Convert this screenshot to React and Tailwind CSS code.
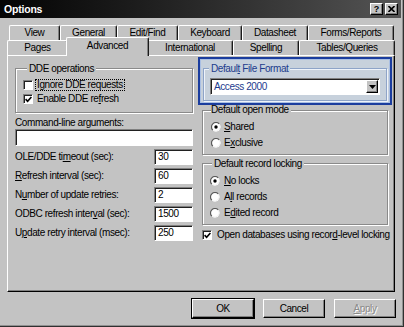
import React from 'react';

const raised = 'border border-t-white border-l-white border-r-black border-b-black shadow-[inset_-1px_-1px_0_#808080]';
const sunken = 'border border-t-[#808080] border-l-[#808080] border-r-white border-b-white shadow-[inset_1px_1px_0_#202020]';
const etched = 'border border-[#8a8a8a] shadow-[inset_1px_1px_0_#fff,1px_1px_0_#fff]';

const backTabs = [
    { label: 'View', w: 'w-[51px]' },
    { label: 'General', w: 'w-[57px]' },
    { label: 'Edit/Find', w: 'w-[61px]' },
    { label: 'Keyboard', w: 'w-[64px]' },
    { label: 'Datasheet', w: 'w-[66px]' },
    { label: 'Forms/Reports', w: 'w-[86px]' },
];

const frontTabs = [
    { label: 'Pages', w: 'w-[61px]' },
    { label: 'Advanced', w: 'w-[83px]', active: true },
    { label: 'International', w: 'w-[86px]' },
    { label: 'Spelling', w: 'w-[66px]' },
    { label: 'Tables/Queries', w: 'w-[96px]' },
];

const tabBase = 'flex items-center justify-center border-t border-l border-r border-t-white border-l-white border-r-[#1a1a1a] rounded-t-[2px] shadow-[inset_-1px_0_0_#808080] bg-[#c3c3c3]';

const Check = ({ checked }) => (
    <span className={`w-[10px] h-[10px] bg-white ${sunken} flex items-center justify-center shrink-0`}>
        {checked && (
            <svg width="7" height="7" viewBox="0 0 7 7">
                <path d="M0.6 3.1 L2.6 5.3 L6.4 0.9" stroke="black" strokeWidth="1.6" fill="none" />
            </svg>
        )}
    </span>
);

const Radio = ({ checked }) => (
    <svg width="10" height="10" viewBox="0 0 10 10" className="shrink-0">
        <circle cx="5" cy="5" r="4.5" fill="white" />
        <path d="M1.8 8.2 A4.5 4.5 0 0 1 8.2 1.8" stroke="#5a5a5a" strokeWidth="1.2" fill="none" />
        <path d="M8.4 2.2 A4.5 4.5 0 0 1 2.2 8.4" stroke="#f2f2f2" strokeWidth="1" fill="none" />
        {checked && <circle cx="5" cy="5" r="1.7" fill="black" />}
    </svg>
);

const Field = ({ label, value }) => (
    <div className="flex items-center justify-between h-[16px]">
        <span>{label}</span>
        <div className={`w-[39px] h-[16px] bg-white ${sunken} flex items-center pl-[3px]`}>{value}</div>
    </div>
);

const Button = ({ children, def, disabled }) => (
    <div className={`w-[62px] h-[19px] flex items-center justify-center bg-[#c3c3c3] ${def ? 'outline outline-1 outline-black' : ''} ${raised}`}>
        <span className={disabled ? 'text-[#8a8a8a] [text-shadow:1px_1px_0_#fff]' : ''}>{children}</span>
    </div>
);

const App = () => {
    return (
        <div className="w-[404px] h-[327px] bg-[#c3c3c3] flex flex-col overflow-hidden font-['Liberation_Sans',Arial,sans-serif] text-[10px] tracking-[-0.4px] text-black leading-none shadow-[inset_-1px_-1px_0_#303030,inset_-2px_-2px_0_#909090]">
            {/* Title bar */}
            <div className="h-[18px] mr-[3px] flex items-center justify-between pl-[4px] pr-[3px] bg-linear-to-r from-[#050505] to-[#555555]">
                <span className="text-white font-bold text-[10.5px] tracking-[-0.2px]">Options</span>
                <div className="flex gap-[2px]">
                    <span className={`w-[13px] h-[12px] bg-[#c3c3c3] ${raised} flex items-center justify-center font-bold text-[9px] tracking-normal`}>?</span>
                    <span className={`w-[13px] h-[12px] bg-[#c3c3c3] ${raised} flex items-center justify-center`}>
                        <svg width="7" height="6" viewBox="0 0 7 6">
                            <path d="M0.5 0 L6.5 6 M6.5 0 L0.5 6" stroke="black" strokeWidth="1.6" />
                        </svg>
                    </span>
                </div>
            </div>

            {/* Tabs */}
            <div className="pt-[7px]">
                <div className="flex pl-[9px] h-[15px]">
                    {backTabs.map(t => (
                        <div key={t.label} className={`${tabBase} ${t.w} h-[15px]`}>{t.label}</div>
                    ))}
                </div>
                <div className="flex pl-[7px] h-[15px] items-end">
                    {frontTabs.map(t => t.active ? (
                        <div key={t.label} className={`${tabBase} ${t.w} relative z-10 -mx-[2px] -mb-[1px] h-[19px] pb-[3px]`}>{t.label}</div>
                    ) : (
                        <div key={t.label} className={`${tabBase} ${t.w} h-[15px]`}>{t.label}</div>
                    ))}
                </div>
            </div>

            {/* Panel */}
            <div className="ml-[7px] w-[388px] h-[237px] border border-t-white border-l-white border-r-black border-b-black shadow-[inset_-1px_-1px_0_#808080] flex pt-[1px]">
                {/* Left column */}
                <div className="ml-[7px] mt-[6px] w-[178px] flex flex-col">
                    <fieldset className={`${etched} h-[50px] pl-[7px] pt-[4px] flex flex-col gap-0`}>
                        <legend className="ml-[4px] px-[2px] leading-[11px] bg-[#c3c3c3]">DDE operations</legend>
                        <div className="flex items-center h-[14px]">
                            <Check />
                            <span className="ml-[2px] px-[2px] py-[1px] outline outline-1 outline-dotted outline-black -outline-offset-1">Ignore DDE requests</span>
                        </div>
                        <div className="flex items-center h-[14px] gap-[4px]">
                            <Check checked />
                            <span>Enable DDE re<u>f</u>resh</span>
                        </div>
                    </fieldset>
                    <div className="mt-[4px] leading-[11px]">Command-line arguments:</div>
                    <div className={`mt-[1px] h-[17px] w-[178px] bg-white ${sunken}`}></div>
                    <div className="mt-[3px] flex flex-col gap-[3px]">
                        <Field label={<>OLE/DDE ti<u>m</u>eout (sec):</>} value="30" />
                        <Field label={<><u>R</u>efresh interval (sec):</>} value="60" />
                        <Field label={<>N<u>u</u>mber of update retries:</>} value="2" />
                        <Field label={<>ODBC refresh inter<u>v</u>al (sec):</>} value="1500" />
                        <Field label={<>U<u>p</u>date retry interval (msec):</>} value="250" />
                    </div>
                </div>

                {/* Right column */}
                <div className="ml-[5px] w-[194px] flex flex-col">
                    <div className="h-[48px] border-2 border-[#1b3d9e] bg-[#c7d1dc] shadow-[inset_0_0_0_1px_#a9bfe4] px-[3px] pt-[4px]">
                        <fieldset className="border border-[#8ea4c8] shadow-[inset_1px_1px_0_#eef3fa,1px_1px_0_#eef3fa] h-[38px]">
                            <legend className="ml-[5px] px-[2px] leading-[11px] bg-[#c7d1dc] text-[#1c3c8c]">Defaul<u>t</u> File Format</legend>
                            <div className={`mt-[4px] ml-[6px] w-[170px] h-[17px] bg-white ${sunken} flex items-center justify-between pl-[3px] pr-[1px]`}>
                                <span className="text-[#1c3a8e]">Access 2000</span>
                                <span className={`w-[12px] h-[13px] bg-[#c3c3c3] ${raised} flex items-center justify-center`}>
                                    <svg width="7" height="4" viewBox="0 0 7 4">
                                        <path d="M0 0 H7 L3.5 4 Z" fill="black" />
                                    </svg>
                                </span>
                            </div>
                        </fieldset>
                    </div>

                    <fieldset className={`${etched} ml-[4px] w-[186px] h-[50px] pl-[8px] pt-[5px] flex flex-col gap-[2px]`}>
                        <legend className="ml-[0px] pr-[2px] leading-[10px] bg-[#c3c3c3]">Default open mode</legend>
                        <div className="flex items-center h-[14px] gap-[3px]">
                            <Radio checked />
                            <span><u>S</u>hared</span>
                        </div>
                        <div className="flex items-center h-[14px] gap-[3px]">
                            <Radio />
                            <span>E<u>x</u>clusive</span>
                        </div>
                    </fieldset>

                    <fieldset className={`${etched} mt-[3px] ml-[4px] w-[186px] h-[67px] pl-[7px] pt-[5px] flex flex-col gap-[2px]`}>
                        <legend className="ml-[2px] px-[2px] leading-[11px] bg-[#c3c3c3]">Default record locking</legend>
                        <div className="flex items-center h-[14px] gap-[4px]">
                            <Radio checked />
                            <span><u>N</u>o locks</span>
                        </div>
                        <div className="flex items-center h-[14px] gap-[4px]">
                            <Radio />
                            <span>A<u>l</u>l records</span>
                        </div>
                        <div className="flex items-center h-[14px] gap-[4px]">
                            <Radio />
                            <span>E<u>d</u>ited record</span>
                        </div>
                    </fieldset>

                    <div className="mt-[3px] ml-[4px] flex items-center h-[14px] gap-[5px]">
                        <Check checked />
                        <span>Open databases using recor<u>d</u>-level locking</span>
                    </div>
                </div>
            </div>

            {/* Buttons */}
            <div className="flex justify-end gap-[9px] pr-[8px] mt-[7px]">
                <Button def>OK</Button>
                <Button>Cancel</Button>
                <Button disabled><u>A</u>pply</Button>
            </div>
        </div>
    );
};

export default App;
